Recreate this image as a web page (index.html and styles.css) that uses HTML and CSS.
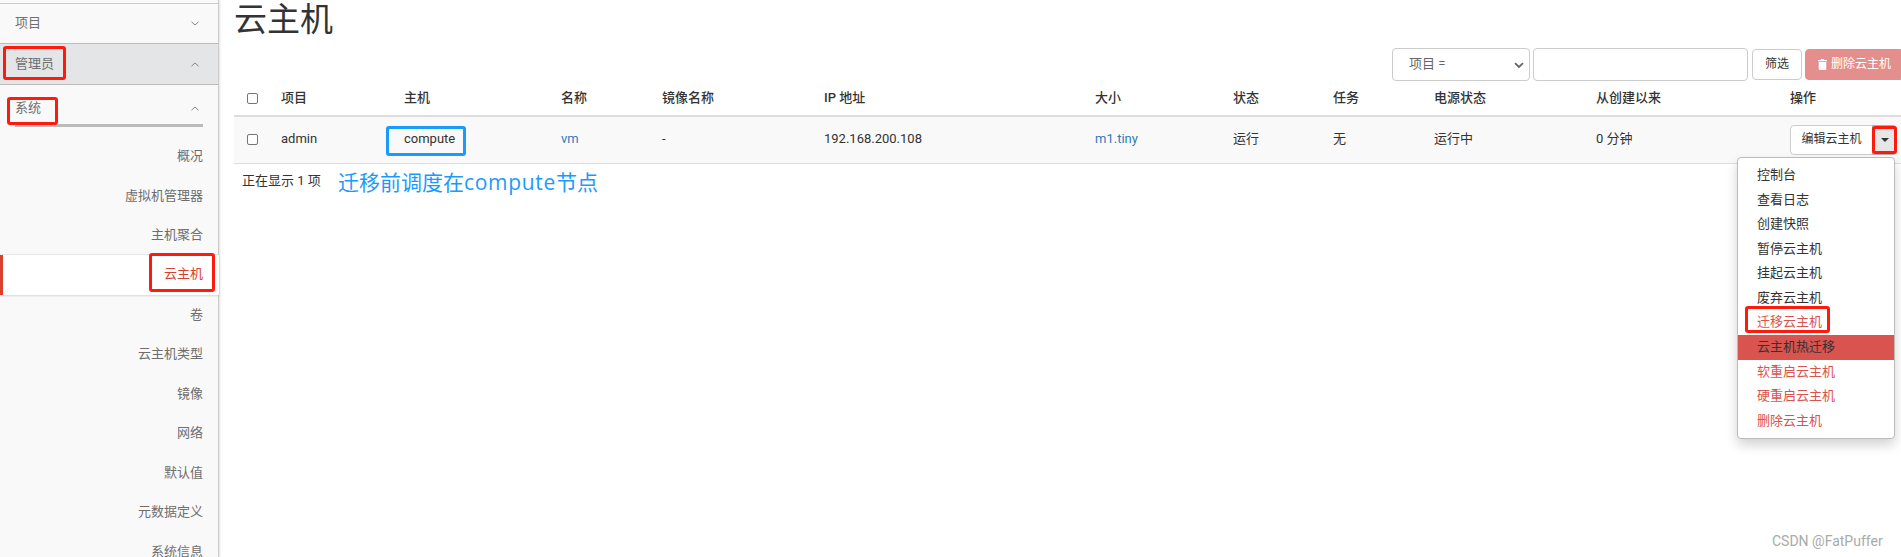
FILE: index.html
```html
<!DOCTYPE html>
<html lang="zh">
<head>
<meta charset="utf-8">
<title>云主机</title>
<link rel="stylesheet" href="styles.css">
</head>
<body>
<div class="page">
  <aside class="sidebar">
    <div class="nav-head nav-first"><span>项目</span><svg class="chev" viewBox="0 0 8 5"><path d="M.5.8 4 4 7.5.8"/></svg></div>
    <div class="nav-head nav-open"><span>管理员</span><svg class="chev" viewBox="0 0 8 5"><path d="M.5 4.2 4 1l3.5 3.2"/></svg></div>
    <div class="nav-sub"><span>系统</span><svg class="chev" viewBox="0 0 8 5"><path d="M.5 4.2 4 1l3.5 3.2"/></svg></div>
    <ul class="nav-list">
      <li>概况</li>
      <li>虚拟机管理器</li>
      <li>主机聚合</li>
      <li class="active">云主机</li>
      <li>卷</li>
      <li>云主机类型</li>
      <li>镜像</li>
      <li>网络</li>
      <li>默认值</li>
      <li>元数据定义</li>
      <li>系统信息</li>
    </ul>
  </aside>
  <main class="main">
    <h1 class="title">云主机</h1>
    <div class="toolbar">
      <div class="select"><span>项目 =</span><svg class="select-arrow" viewBox="0 0 10 7"><path d="M1 1.2 5 5l4-3.8"/></svg></div>
      <input class="filter-input" type="text">
      <button class="btn btn-filter" type="button">筛选</button>
      <button class="btn btn-delete" type="button"><svg class="trash" viewBox="0 0 10 12"><path d="M3.4 0h3.2l.5 1H10v1.4H0V1h2.900zM.8 3.200h8.400V11a1 1 0 0 1-1 1H1.800a1 1 0 0 1-1-1z"/></svg>删除云主机</button>
    </div>
    <table class="grid">
      <colgroup>
        <col class="c-check"><col class="c-project"><col class="c-host"><col class="c-name"><col class="c-image"><col class="c-ip"><col class="c-size"><col class="c-status"><col class="c-task"><col class="c-power"><col class="c-age"><col class="c-action">
      </colgroup>
      <thead>
        <tr>
          <th class="cell-check"><input class="check" type="checkbox"></th>
          <th>项目</th><th>主机</th><th>名称</th><th>镜像名称</th><th>IP 地址</th><th>大小</th><th>状态</th><th>任务</th><th>电源状态</th><th>从创建以来</th><th>操作</th>
        </tr>
      </thead>
      <tbody>
        <tr>
          <td class="cell-check"><input class="check" type="checkbox"></td>
          <td>admin</td><td>compute</td><td><a class="link">vm</a></td><td>-</td><td>192.168.200.108</td><td><a class="link">m1.tiny</a></td><td>运行</td><td>无</td><td>运行中</td><td>0 分钟</td>
          <td class="cell-action"><div class="btn-group"><button class="btn btn-edit" type="button">编辑云主机</button><button class="btn btn-caret" type="button"><span class="caret"></span></button></div></td>
        </tr>
      </tbody>
    </table>
    <div class="summary"><span class="count">正在显示 1 项</span><span class="note">迁移前调度在<span class="note-latin">compute</span>节点</span></div>
    <ul class="menu">
      <li>控制台</li>
      <li>查看日志</li>
      <li>创建快照</li>
      <li>暂停云主机</li>
      <li>挂起云主机</li>
      <li>废弃云主机</li>
      <li class="danger">迁移云主机</li>
      <li class="hover">云主机热迁移</li>
      <li class="danger">软重启云主机</li>
      <li class="danger">硬重启云主机</li>
      <li class="danger">删除云主机</li>
    </ul>
  </main>
</div>
<div class="mark red m-admin"></div>
<div class="mark red m-system"></div>
<div class="mark red m-instances"></div>
<div class="mark red m-caret"></div>
<div class="mark red m-migrate"></div>
<div class="mark blue m-compute"></div>
<div class="watermark">CSDN @FatPuffer</div>
</body>
</html>
```
FILE: styles.css
```css
* { box-sizing: border-box; }
html, body { margin: 0; height: 557px; overflow: hidden; background: #fff; }
body {
  position: relative;
  font-family: Roboto, "Noto Sans CJK SC", sans-serif;
  font-size: 13px;
  line-height: 18.57px;
  color: #333;
}
.page { display: flex; height: 557px; }

.sidebar {
  flex: 0 0 219px;
  height: 557px;
  background: #f9f9f9;
  border-right: 1px solid #ccc;
  box-shadow: 1px 0 2px rgba(0,0,0,.12);
  color: #6e6e6e;
  z-index: 1;
}
.nav-head {
  display: flex;
  justify-content: space-between;
  align-items: center;
  padding: 0 15px;
  height: 41px;
  border-bottom: 1px solid #bbb;
}
.nav-first { border-top: 1px solid #ccc; margin-top: 3px; }
.nav-open { background: #e4e5e6; }
.chev { width: 8px; height: 5px; fill: none; stroke: #777; stroke-width: .9; margin-right: 4px; }
.nav-sub {
  display: flex;
  justify-content: space-between;
  align-items: center;
  margin: 0 15px;
  padding-top: 15px;
  height: 42px;
  padding-bottom: 8px;
  border-bottom: 3px solid #bbb;
}
.nav-list { list-style: none; margin: 9px 0 0; padding: 0; }
.nav-list li {
  height: 39.5px;
  padding-right: 15px;
  text-align: right;
  line-height: 39.5px;
}
.nav-list li.active {
  position: relative;
  height: 40px;
  line-height: 37px;
  margin-right: -1px;
  padding-right: 16px;
  background: #fff;
  color: #d9402f;
  border-left: 3px solid #d9402f;
  box-shadow: 0 1px 2px rgba(0,0,0,.14), 0 -1px 1px rgba(0,0,0,.06);
}

.main { position: relative; flex: 1; min-width: 0; padding-left: 15px; }
.title {
  margin: 0;
  height: 48px;
  font-size: 33px;
  line-height: 40px;
  font-weight: 400;
  color: #333;
}
.toolbar {
  display: flex;
  align-items: center;
  justify-content: flex-end;
  height: 33px;
}
.select {
  position: relative;
  display: flex;
  align-items: center;
  flex: 0 0 138px;
  height: 33px;
  padding-left: 16px;
  border: 1px solid #ccc;
  border-radius: 4px;
  color: #666;
}
.select-arrow {
  position: absolute;
  right: 5px;
  top: 13px;
  width: 10px;
  height: 7px;
  fill: none;
  stroke: #666;
  stroke-width: 1.800;
}
.filter-input {
  flex: 0 0 215px;
  height: 33px;
  margin-left: 3px;
  border: 1px solid #ccc;
  border-radius: 4px;
  background: #fff;
}
.btn {
  font: inherit;
  font-size: 12px;
  color: #333;
  background: #fff;
  border: 1px solid #ccc;
  border-radius: 4px;
  padding: 0;
}
.btn-filter { flex: 0 0 50px; height: 31px; margin-left: 4px; }
.btn-delete {
  display: flex;
  align-items: center;
  flex: 0 0 96px;
  height: 31px;
  margin-left: 3px;
  padding-left: 12px;
  border-color: #e48f8d;
  border-radius: 4px 0 0 4px;
  background: #e48f8d;
  color: #fff;
  white-space: nowrap;
}
.trash { width: 9px; height: 11px; margin-right: 4px; fill: #fff; }

.grid {
  width: 100%;
  table-layout: fixed;
  border-collapse: collapse;
  margin-top: 1px;
}
.c-check { width: 39px; }
.c-project { width: 123px; }
.c-host { width: 157px; }
.c-name { width: 101px; }
.c-image { width: 162px; }
.c-ip { width: 271px; }
.c-size { width: 138px; }
.c-status { width: 100px; }
.c-task { width: 101px; }
.c-power { width: 162px; }
.c-age { width: 194px; }
.c-action { width: 119px; }
.grid th {
  height: 34px;
  padding: 0 8px;
  text-align: left;
  font-weight: 500;
  border-bottom: 2px solid #ddd;
}
.grid td {
  height: 47px;
  padding: 0 8px;
  background: #f9f9f9;
  border-bottom: 1px solid #ddd;
  white-space: nowrap;
}
.grid .cell-check { padding: 0 0 0 13px; }
.check {
  display: block;
  appearance: none;
  width: 11px;
  height: 11px;
  margin: 0;
  background: #fff;
  border: 1px solid #767676;
  border-radius: 2px;
}
.link { color: #337ab7; }
.btn-group { display: flex; }
.btn-edit { flex: 0 0 83px; height: 30px; border-radius: 4px 0 0 4px; }
.btn-caret {
  display: flex;
  align-items: center;
  justify-content: center;
  flex: 0 0 25px;
  height: 30px;
  margin-left: -1px;
  background: #e6e6e6;
  border-color: #adadad;
  border-radius: 0 4px 4px 0;
}
.caret {
  width: 0;
  height: 0;
  border-top: 4px solid #333;
  border-left: 4px solid transparent;
  border-right: 4px solid transparent;
}
.summary { display: flex; align-items: center; height: 36px; padding-left: 8px; }
.count { width: 96px; }
.note {
  padding-top: 2px;
  font-family: "Open Sans", "Noto Sans CJK SC", sans-serif;
  font-size: 21px;
  color: #1a9bfc;
}
.note-latin { letter-spacing: .7px; }

.menu {
  position: absolute;
  z-index: 3;
  left: 1518px;
  top: 157px;
  width: 158px;
  margin: 0;
  padding: 5px 0;
  list-style: none;
  background: #fff;
  border: 1px solid #bbb;
  border-radius: 4px;
  box-shadow: 0 6px 12px rgba(0,0,0,.175);
}
.menu li { height: 24.57px; padding: 3px 19px; white-space: nowrap; }
.menu .danger { color: #d9534f; }
.menu .hover { background: #d9534f; color: #333; }

.mark { position: absolute; z-index: 4; border-radius: 3px; }
.red { border: 3px solid #ff1a0e; }
.blue { border: 3px solid #1a9bfc; }
.m-admin { left: 3px; top: 46px; width: 63px; height: 34px; }
.m-system { left: 7px; top: 97px; width: 51px; height: 28px; }
.m-instances { left: 149px; top: 253px; width: 66px; height: 39px; }
.m-caret { left: 1872px; top: 126px; width: 25px; height: 28px; }
.m-migrate { left: 1745px; top: 306px; width: 85px; height: 27px; }
.m-compute { left: 386px; top: 126px; width: 80px; height: 30px; }
.watermark {
  position: absolute;
  z-index: 4;
  left: 1772px;
  top: 532px;
  font-size: 14px;
  color: #aaa;
  white-space: nowrap;
}
```
